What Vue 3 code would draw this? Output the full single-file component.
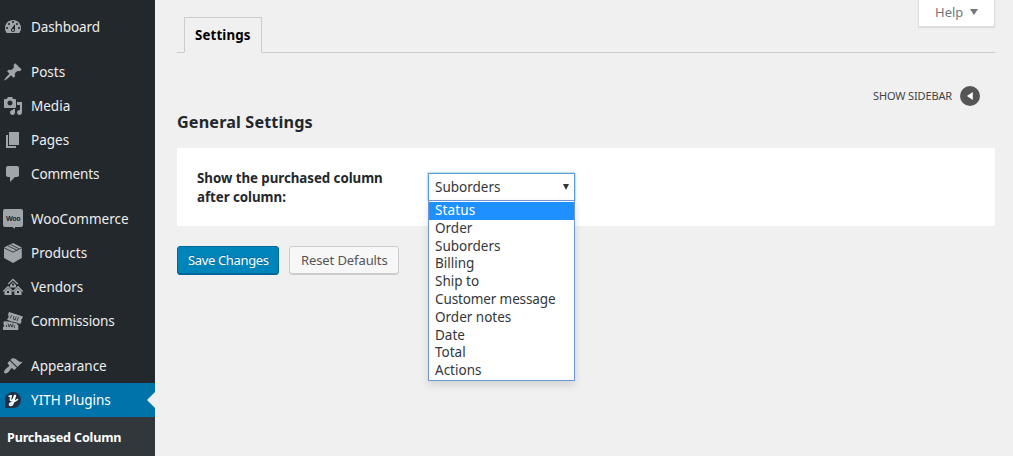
<script setup>
const groups = [
  [{ id: 'dashboard', label: 'Dashboard' }],
  [
    { id: 'posts', label: 'Posts' },
    { id: 'media', label: 'Media' },
    { id: 'pages', label: 'Pages' },
    { id: 'comments', label: 'Comments' },
  ],
  [
    { id: 'woo', label: 'WooCommerce' },
    { id: 'products', label: 'Products' },
    { id: 'vendors', label: 'Vendors' },
    { id: 'commissions', label: 'Commissions' },
  ],
  [
    { id: 'appearance', label: 'Appearance' },
    { id: 'yith', label: 'YITH Plugins' },
  ],
]
const paths = {
  dashboard: 'M3.76 16h12.48c1.1-1.37 1.76-3.11 1.76-5 0-4.42-3.58-8-8-8s-8 3.58-8 8c0 1.89.66 3.63 1.76 5zM10 4c.55 0 1 .45 1 1s-.45 1-1 1-1-.45-1-1 .45-1 1-1zM6 6c.55 0 1 .45 1 1s-.45 1-1 1-1-.45-1-1 .45-1 1-1zm8 0c.55 0 1 .45 1 1s-.45 1-1 1-1-.45-1-1 .45-1 1-1zm-5.37 5.55L12 7v6c0 1.1-.9 2-2 2s-2-.9-2-2c0-.57.24-1.08.63-1.45zM4 10c.55 0 1 .45 1 1s-.45 1-1 1-1-.45-1-1 .45-1 1-1zm12 0c.55 0 1 .45 1 1s-.45 1-1 1-1-.45-1-1 .45-1 1-1zm-5 3c0-.55-.45-1-1-1s-1 .45-1 1 .45 1 1 1 1-.45 1-1z',
  posts: 'M10.44 3.02l1.82-1.82 6.36 6.35-1.83 1.82c-1.05-.68-2.48-.57-3.41.36l-.75.75c-.92.93-1.04 2.35-.35 3.41l-1.83 1.82-2.41-2.41-2.8 2.79c-.42.42-3.38 2.71-3.8 2.29s1.86-3.39 2.28-3.81l2.79-2.79L4.1 9.36l1.83-1.82c1.05.69 2.48.57 3.4-.36l.75-.75c.93-.92 1.05-2.35.36-3.41z',
  media: 'M13 11V4c0-.55-.45-1-1-1h-1.67L9 1H5L3.67 3H2c-.55 0-1 .45-1 1v7c0 .55.45 1 1 1h10c.55 0 1-.45 1-1zM7 4.5c1.38 0 2.5 1.12 2.5 2.5S8.38 9.5 7 9.5 4.5 8.38 4.5 7 5.62 4.5 7 4.5zM14 6h5v10.5c0 1.38-1.12 2.5-2.5 2.5S14 17.88 14 16.5s1.12-2.5 2.5-2.5c.17 0 .34.02.5.05V9h-3V6zm-4 8.05V13h2v3.5c0 1.38-1.12 2.5-2.5 2.5S7 17.88 7 16.5 8.12 14 9.5 14c.17 0 .34.02.5.05z',
  pages: 'M6 15V2h10v13H6zm-1 1h8v2H3V5h2v11z',
  comments: 'M5 2h9c1.1 0 2 .9 2 2v7c0 1.1-.9 2-2 2h-2l-5 5v-5H5c-1.1 0-2-.9-2-2V4c0-1.1.9-2 2-2z',
  appearance: 'M14.48 11.06L7.41 3.99l1.5-1.5c.5-.56 2.3-.47 3.51.32 1.21.8 1.43 1.28 2.91 2.1 1.18.64 2.45 1.26 4.45.85zm-.71.71L6.7 4.7 4.93 6.47c-.39.39-.39 1.02 0 1.41l1.06 1.06c.39.39.39 1.03 0 1.42-.6.6-1.43 1.11-2.21 1.69-.35.26-.7.53-1.01.84C1.43 14.23.4 16.08 1.4 17.07c.99 1 2.84-.03 4.18-1.36.31-.31.58-.66.85-1.02.57-.78 1.08-1.61 1.69-2.21.39-.39 1.02-.39 1.41 0l1.06 1.06c.39.39 1.02.39 1.41 0z',
}
const options = ['Status', 'Order', 'Suborders', 'Billing', 'Ship to', 'Customer message', 'Order notes', 'Date', 'Total', 'Actions']
</script>

<template>
  <div class="page">
    <nav class="sidebar">
      <div v-for="(group, g) in groups" :key="g" class="group">
        <a v-for="item in group" :key="item.id" class="item" :class="item.id">
          <svg class="icon" viewBox="0 0 20 20">
            <path v-if="paths[item.id]" :d="paths[item.id]" fill-rule="evenodd" />
            <g v-else-if="item.id === 'woo'">
              <path d="M2 0h16a2 2 0 0 1 2 2v14a2 2 0 0 1-2 2h-6v1.800L9.300 18H2a2 2 0 0 1-2-2V2a2 2 0 0 1 2-2z" />
              <text x="3" y="11.800" class="woo-text">Woo</text>
            </g>
            <g v-else-if="item.id === 'products'">
              <path d="M10 0l8.800 4.500v10.500L10 20l-9-5V4.500z" />
              <path d="M1 4.800l9 4.400 8.800-4.400M5.200 3l9 4.400M7.800 1.600l8.200 4.200" class="cut fine" />
            </g>
            <g v-else-if="item.id === 'vendors'">
              <path d="M5.200 7L10 2.500 14.800 7M.3 14.500L5 9.700l4.700 4.800M10.300 14.500L15 9.700l4.700 4.800" class="roof" />
              <path fill-rule="evenodd" d="M10 5l3 3v2.500H7V8zM9 6.500v2h2v-2zM1.500 14.500L5 11l3.600 3.500V18H1.500zM4 14v2h2v-2zM11.400 14.500L15 11l3.500 3.500V18h-7.100zM14 14v2h2v-2z" />
            </g>
            <g v-else-if="item.id === 'commissions'">
              <path d="M6 1l14 4.500-1 2.500-1 .7.500 1.800-1 2.500L4 9l1-2 .8-1-.8-2.500z" />
              <path d="M.5 10.500l14.500-1v2.500l-1 1 1.300 1.200V19H0v-3l1.500-1L.5 13.500z" />
              <path d="M8.500 4l-1.200 3.500M11 5l-.8 3 2 1 1-3.500M15.500 6l-1.500 4M4 9.800l11 2.500M5 12.500l1 3.500 1.500-3 1.300 3.200L10 12.500M11 14l.5 3M3.500 14v2" class="cut fine" />
            </g>
            <g v-else>
              <path d="M2 18V10a8 8 0 1 1 8 8z" class="yith-bg" />
              <path d="M6.200 6.300l2-.5-.8 3.400q-.2 1.600 1.200 1.400 1.800-.4 3-5.100M12.400 5.500L10.500 12Q9.300 16 7 15.200q-1.200-1 .8-2.200Q12 11.500 14.500 9.500" class="yith-mark" />
            </g>
          </svg>
          <span class="label">{{ item.label }}</span>
        </a>
      </div>
      <div class="submenu"><span>Purchased Column</span></div>
    </nav>

    <main class="content">
      <header class="tabs">
        <div class="tab"><span>Settings</span></div>
        <button class="help"><span>Help</span><svg viewBox="0 0 8 6"><path d="M0 0h8L4 6z" /></svg></button>
      </header>
      <div class="toggle">
        <span>SHOW SIDEBAR</span>
        <svg viewBox="0 0 20 20"><circle cx="10" cy="10" r="10" /><path d="M7 10l5.800-4v8z" /></svg>
      </div>
      <h3><span>General Settings</span></h3>
      <section class="panel">
        <div class="field"><span class="l1">Show the purchased column</span><br><span class="l2">after column:</span></div>
        <div class="combo">
          <div class="select"><span>Suborders</span><svg viewBox="0 0 6 6"><path d="M0 0h6L3 6z" /></svg></div>
          <ul class="menu">
            <li v-for="(o, i) in options" :key="o" :class="{ active: i === 0 }"><span>{{ o }}</span></li>
          </ul>
        </div>
      </section>
      <div class="actions">
        <button class="primary"><span>Save Changes</span></button>
        <button class="secondary"><span>Reset Defaults</span></button>
      </div>
    </main>
  </div>
</template>

<style>
body { background: #f0f0f0; }
</style>
<style scoped>
.page { display: flex; width: 1013px; height: 456px; overflow: hidden; background: #f0f0f0; color: #32373c; font: 13.5px/18px "Noto Sans", "Open Sans", sans-serif; }
.page * { box-sizing: border-box; }
span { white-space: nowrap; }
.sidebar { width: 155px; flex: none; display: flex; flex-direction: column; background: #23282d; padding-top: 10px; }
.group { margin-bottom: 11px; }
.group:nth-child(4) { margin-bottom: 0; }
.item { display: flex; align-items: center; height: 34px; padding-left: 3px; color: #eee; position: relative; letter-spacing: -.1px; }
.icon { width: 20px; height: 20px; margin-right: 8px; fill: #a0a5aa; flex: none; letter-spacing: 0; overflow: visible; }
.woo, .posts, .media, .pages, .products, .vendors, .appearance { letter-spacing: 0; }
.cut { fill: none; stroke: #23282d; stroke-width: 1; }
.fine { stroke-width: .8; }
.roof { fill: none; stroke: #a0a5aa; stroke-width: 1.3; }
.woo-text { font: bold 7px "Noto Sans", sans-serif; letter-spacing: -.4px; fill: #23282d; }
.yith { background: #0073aa; color: #fff; letter-spacing: 0; }
.yith::after { content: ""; position: absolute; right: 0; top: 9px; border: 8px solid transparent; border-right-color: #f0f0f0; border-left: 0; }
.yith-bg { fill: #1f3045; }
.yith-mark { fill: none; stroke: #fff; stroke-width: 1.6; stroke-linecap: round; stroke-linejoin: round; }
.submenu { flex: 1; background: #32373c; padding: 12px 0 0 7px; color: #fff; font-size: 12.600px; font-weight: 700; letter-spacing: -.17px; }
.content { flex: 1; padding: 0 18px 0 22px; }
.tabs { height: 53px; display: flex; justify-content: space-between; align-items: flex-start; border-bottom: 1px solid #ccc; }
.tab { margin: 17px 0 0 7px; width: 78px; height: 36px; border: 1px solid #ccc; border-bottom-color: #f0f0f0; padding: 8px 0 0 10px; color: #000; font-weight: 700; font-size: 13.300px; letter-spacing: .13px; }
button { font: 13px/18px "Noto Sans", "Open Sans", sans-serif; }
.help { width: 77px; height: 27px; background: #fff; border: 1px solid #ddd; border-top: 0; box-shadow: 0 1px 1px rgba(0,0,0,.08); color: #72777c; display: flex; align-items: center; padding: 0 0 2px 16px; }
.help svg { width: 8px; height: 6px; fill: #72777c; margin-left: 7px; }
.toggle { margin-top: 33px; height: 20px; display: flex; align-items: center; justify-content: flex-end; padding-right: 15px; font-size: 11px; color: #444; letter-spacing: -.15px; }
.toggle svg { width: 20px; height: 20px; margin-left: 8px; fill: #555; }
.toggle path { fill: #fff; }
h3 { margin: 5px 0 0; height: 22px; font-size: 16.200px; line-height: 22px; color: #23282d; letter-spacing: .14px; }
.panel { margin-top: 15px; height: 78px; background: #fff; padding: 20px 20px 0; display: flex; }
.field { width: 231px; padding-top: 1px; font-size: 13.300px; line-height: 19px; font-weight: 700; color: #23282d; letter-spacing: -.04px; }
.combo { position: relative; width: 147px; margin-top: 5px; height: 28px; }
.select { height: 28px; border: 1px solid #5b9dd9; box-shadow: 0 0 2px rgba(30,140,190,.8); padding: 0 5px 0 6px; display: flex; align-items: center; justify-content: space-between; }
.select svg { width: 6px; height: 6px; fill: #32373c; }
.menu { position: absolute; z-index: 2; top: 27px; left: 0; width: 147px; height: 181px; margin: 0; padding: 1px 0 0; list-style: none; background: #fff; border: 1px solid #7096d8; box-shadow: 0 4px 8px rgba(0,0,0,.12); }
.menu li { height: 17.800px; line-height: 17.800px; padding-left: 6px; }
.menu li:nth-child(6) { letter-spacing: -.12px; }
.menu .active { background: #1e90ff; color: #fff; letter-spacing: .15px; }
.actions { margin-top: 20px; display: flex; gap: 10px; }
.actions button { height: 29px; border-radius: 3px; padding: 0 0 1px 10px; text-align: left; }
.actions .primary { width: 102px; background: #0085ba; border: 1px solid #006799; box-shadow: inset 0 -1px #006799; color: #fff; text-shadow: 0 -1px 1px #006799; letter-spacing: -.35px; }
.actions .secondary { width: 110px; padding-left: 11px; background: #f7f7f7; border: 1px solid #ccc; box-shadow: inset 0 -1px #ccc; color: #555; letter-spacing: -.1px; }
</style>
